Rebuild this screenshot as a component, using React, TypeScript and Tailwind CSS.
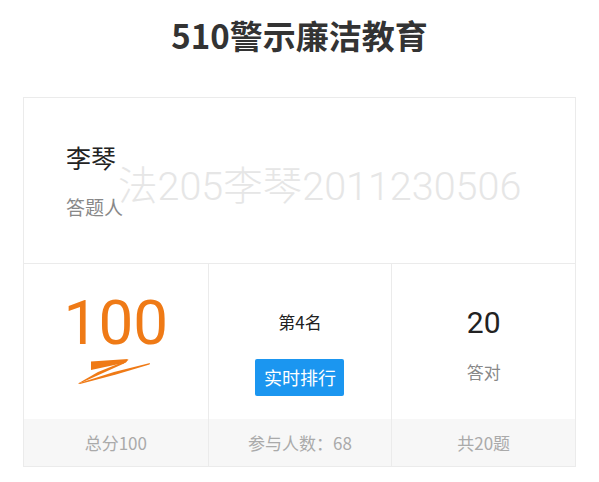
import React from "react";

const cjk = { fontFamily: '"Noto Sans CJK SC", "Noto Sans", sans-serif' };
const num = { fontFamily: 'Roboto, "Noto Sans CJK SC", sans-serif' };

function Zig() {
  return (
    <svg width="76" height="28" viewBox="0 0 76 28" className="block">
      <path d="M15 3.5 L52 1 L50 4.5 L15 12 Z" fill="#ef7a16" />
      <path d="M53 1.5 L48 5.5 L7 24 L2 25.5 L22 14 Z" fill="#ef7a16" />
      <path d="M2 25.5 L38 14 L74 5 L73.5 6.5 L40 16.5 L4 26 Z" fill="#ef7a16" />
    </svg>
  );
}

export default function App() {
  return (
    <div className="w-[599px] h-[482px] bg-white overflow-hidden" style={cjk}>
      <h1 className="pt-[19px] text-center text-[33px] leading-[33px] font-bold text-[#333]">
        510警示廉洁教育
      </h1>
      <div className="ml-[23px] mt-[45px] w-[553px] border border-[#ebebeb]">
        <div className="relative h-[166px] pl-[42px] pt-[43px] border-b border-[#ebebeb]">
          <div className="text-[25px] leading-[32px] text-[#222]">李琴</div>
          <div className="mt-[21px] text-[19px] leading-[26px] text-[#888]">答题人</div>
          <div
            className="absolute left-[94px] top-[69px] text-[39.5px] leading-none font-light text-[#e6e6e6] whitespace-nowrap pointer-events-none"
            style={num}
          >
            法205李琴2011230506
          </div>
        </div>
        <div className="grid grid-cols-3">
          <div className="flex flex-col">
            <div className="h-[155px] flex flex-col items-center pt-[28px]">
              <div className="text-[62px] leading-none text-[#ef7a16]" style={num}>100</div>
              <div className="mt-[4px] -ml-[4px]">
                <Zig />
              </div>
            </div>
            <div className="h-[47px] bg-[#f7f7f7] flex items-center justify-center text-[17px] text-[#aaa]">
              总分100
            </div>
          </div>
          <div className="flex flex-col border-l border-[#ebebeb]">
            <div className="h-[155px] flex flex-col items-center pt-[46px]">
              <div className="text-[17px] leading-[24px] text-[#222]">第4名</div>
              <div className="mt-[25px] w-[89px] h-[37px] rounded-[2px] bg-[#1b96f0] text-white text-[18px] flex items-center justify-center">
                实时排行
              </div>
            </div>
            <div className="h-[47px] bg-[#f7f7f7] flex items-center justify-center text-[17px] text-[#aaa]">
              参与人数：68
            </div>
          </div>
          <div className="flex flex-col border-l border-[#ebebeb]">
            <div className="h-[155px] flex flex-col items-center pt-[44px]">
              <div className="text-[30px] leading-none text-[#222]" style={num}>20</div>
              <div className="mt-[22px] text-[17px] leading-[24px] text-[#888]">答对</div>
            </div>
            <div className="h-[47px] bg-[#f7f7f7] flex items-center justify-center text-[17px] text-[#aaa]">
              共20题
            </div>
          </div>
        </div>
      </div>
    </div>
  );
}
